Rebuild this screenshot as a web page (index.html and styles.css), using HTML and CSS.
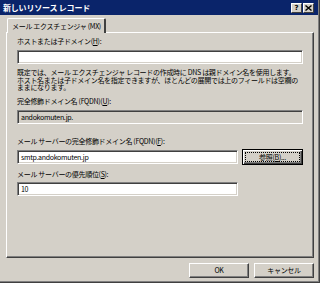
FILE: index.html
```html
<!DOCTYPE html>
<html lang="ja">
<head>
<meta charset="utf-8">
<link rel="stylesheet" href="styles.css">
</head>
<body>
<div class="window">
  <div class="titlebar">
    <span class="title">新しいリソース レコード</span>
    <div class="tbtns">
      <span class="tbtn">?</span>
      <span class="tbtn x">
        <svg width="7" height="6" viewBox="0 0 7 6"><path d="M0.5 0.5 L6.5 5.5 M6.5 0.5 L0.5 5.5" stroke="#000" stroke-width="1.4"/></svg>
      </span>
    </div>
  </div>
  <div class="client">
    <div class="tabs"><div class="tab">メール エクスチェンジャ (MX)</div></div>
    <div class="panel">
      <div class="label l1">ホストまたは子ドメイン(<u>H</u>):</div>
      <div class="field wide"></div>
      <p class="note">既定では、メール エクスチェンジャ レコードの作成時に DNS は親ドメイン名を使用します。ホスト名または子ドメイン名を指定できますが、ほとんどの展開では上のフィールドは空欄のままになります。</p>
      <div class="label l2">完全修飾ドメイン名 (FQDN)(<u>U</u>):</div>
      <div class="field wide readonly">andokomuten.jp.</div>
      <div class="label l3">メール サーバーの完全修飾ドメイン名 (FQDN)(<u>F</u>):</div>
      <div class="row">
        <div class="field narrow">smtp.andokomuten.jp</div>
        <div class="btn focus"><span class="focusrect">参照(<u>B</u>)...</span></div>
      </div>
      <div class="label l4">メール サーバーの優先順位(<u>S</u>):</div>
      <div class="field narrow">10</div>
    </div>
    <div class="actions">
      <div class="btn act">OK</div>
      <div class="btn act">キャンセル</div>
    </div>
  </div>
</div>
</body>
</html>
```
FILE: styles.css
```css
html, body {
  margin: 0;
  padding: 0;
  background: #d4d0c8;
}
body {
  width: 320px;
  height: 283px;
  overflow: hidden;
  font-family: "Noto Sans CJK JP", "Noto Sans", sans-serif;
  font-size: 7px;
  line-height: 9px;
  letter-spacing: -0.3px;
  color: #000;
}
.window {
  box-sizing: border-box;
  width: 320px;
  height: 283px;
  background: #d4d0c8;
  border-right: 1px solid #404040;
  border-bottom: 1px solid #404040;
  box-shadow: inset -1px -1px 0 #808080;
  padding-bottom: 2px;
  display: flex;
  flex-direction: column;
}
.titlebar {
  height: 15px;
  margin-right: 1px;
  background: #0a246a;
  display: flex;
  align-items: center;
  justify-content: space-between;
  padding-left: 3px;
}
.title {
  color: #fff;
  font-weight: bold;
  font-size: 8px;
  line-height: 10px;
  letter-spacing: -0.2px;
}
.tbtns {
  display: flex;
  gap: 1px;
  margin-right: 4px;
}
.tbtn {
  box-sizing: border-box;
  width: 11px;
  height: 10px;
  background: #d4d0c8;
  border-top: 1px solid #fff;
  border-left: 1px solid #fff;
  border-right: 1px solid #404040;
  border-bottom: 1px solid #404040;
  font-family: "DejaVu Sans", sans-serif;
  font-weight: bold;
  font-size: 7px;
  line-height: 8px;
  letter-spacing: 0;
  text-align: center;
  display: flex;
  align-items: center;
  justify-content: center;
}
.client {
  flex: 1;
  display: flex;
  flex-direction: column;
  padding: 3px 5px 0 6px;
}
.tabs {
  display: flex;
  padding-left: 1px;
}
.tab {
  box-sizing: border-box;
  width: 99px;
  height: 15px;
  margin-bottom: -1px;
  position: relative;
  z-index: 1;
  background: #d4d0c8;
  border-top: 1px solid #fff;
  border-left: 1px solid #fff;
  border-right: 2px solid #404040;
  border-radius: 2px 2px 0 0;
  padding: 3px 0 0 4px;
  white-space: nowrap;
}
.panel {
  box-sizing: border-box;
  height: 226px;
  border-top: 1px solid #fff;
  border-left: 1px solid #fff;
  border-right: 1px solid #404040;
  border-bottom: 1px solid #404040;
  box-shadow: inset -1px -1px 0 #808080;
  padding: 4px 10px 0 10px;
  display: flex;
  flex-direction: column;
}
.label {
  white-space: nowrap;
}
.field {
  box-sizing: border-box;
  height: 14px;
  background: #fff;
  border-top: 1px solid #808080;
  border-left: 1px solid #808080;
  border-right: 1px solid #fff;
  border-bottom: 1px solid #fff;
  box-shadow: inset 1px 1px 0 #404040, inset -1px -1px 0 #d4d0c8;
  padding: 2px 0 0 3px;
  white-space: nowrap;
}
.field.wide { width: 286px; }
.field.narrow { width: 221px; }
.field.readonly { background: #d4d0c8; }
.l1 { margin-bottom: 4px; }
.note {
  margin: 5px 0 0 0;
  line-height: 7.6px;
  width: 283px;
}
.l2 { margin-top: 5px; margin-bottom: 4px; }
.l3 { margin-top: 13px; margin-bottom: 3px; }
.l4 { margin-top: 5px; margin-bottom: 3px; }
.row {
  display: flex;
  align-items: center;
  gap: 4px;
}
.btn {
  box-sizing: border-box;
  height: 15px;
  background: #d4d0c8;
  border-top: 1px solid #fff;
  border-left: 1px solid #fff;
  border-right: 1px solid #404040;
  border-bottom: 1px solid #404040;
  box-shadow: inset -1px -1px 0 #808080;
  display: flex;
  align-items: center;
  justify-content: center;
  white-space: nowrap;
}
.btn.focus {
  width: 61px;
  height: 16px;
  border: 1px solid #000;
  box-shadow: inset 1px 1px 0 #fff, inset -1px -1px 0 #404040, inset -2px -2px 0 #808080;
  padding: 2px;
}
.focusrect {
  flex: 1;
  align-self: stretch;
  border: 1px dotted #000;
  display: flex;
  align-items: center;
  justify-content: center;
  line-height: 8px;
}
.actions {
  display: flex;
  justify-content: flex-end;
  gap: 5px;
  margin-top: 5px;
}
.btn.act {
  width: 60px;
}
```
